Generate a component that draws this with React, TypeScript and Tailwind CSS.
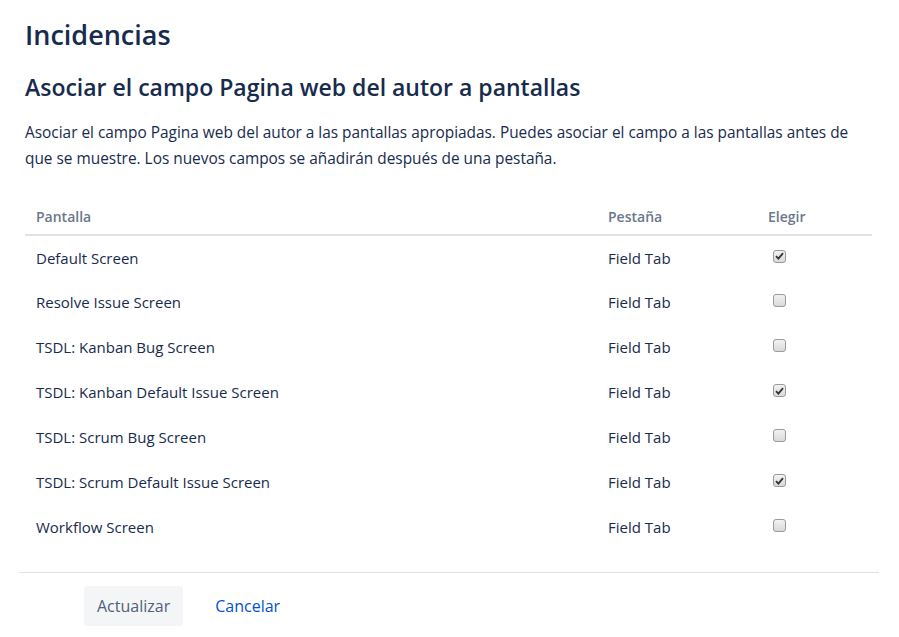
import { useState } from 'react';

type ScreenRow = {
  name: string;
  tab: string;
  selected: boolean;
};

const ROWS: ScreenRow[] = [
  { name: 'Default Screen', tab: 'Field Tab', selected: true },
  { name: 'Resolve Issue Screen', tab: 'Field Tab', selected: false },
  { name: 'TSDL: Kanban Bug Screen', tab: 'Field Tab', selected: false },
  { name: 'TSDL: Kanban Default Issue Screen', tab: 'Field Tab', selected: true },
  { name: 'TSDL: Scrum Bug Screen', tab: 'Field Tab', selected: false },
  { name: 'TSDL: Scrum Default Issue Screen', tab: 'Field Tab', selected: true },
  { name: 'Workflow Screen', tab: 'Field Tab', selected: false },
];

function Checkbox({ checked, onChange }: { checked: boolean; onChange: () => void }) {
  return (
    <button
      type="button"
      role="checkbox"
      aria-checked={checked}
      onClick={onChange}
      className="flex h-[13px] w-[13px] items-center justify-center rounded-[3px] border border-[#9a9a9a] bg-gradient-to-b from-[#f2f2f2] to-[#d9d9d9]"
    >
      {checked ? (
        <svg width="9" height="8" viewBox="0 0 9 8" aria-hidden="true">
          <path d="M1 4.2 L3.4 6.6 L8 1.2" fill="none" stroke="#333" strokeWidth="1.8" />
        </svg>
      ) : null}
    </button>
  );
}

export default function App() {
  const [rows, setRows] = useState(ROWS);

  const toggle = (index: number) => {
    setRows((current) =>
      current.map((row, i) => (i === index ? { ...row, selected: !row.selected } : row))
    );
  };

  return (
    <div className="min-h-screen bg-white font-['Open_Sans',sans-serif] text-[#172b4d]">
      <div className="px-[19px] pt-[17px]">
        <div className="px-[6px]">
          <h1 className="text-[27px] font-semibold leading-[36px]">Incidencias</h1>
          <h2 className="mt-[18px] text-[23px] font-semibold leading-[32px]">
            Asociar el campo Pagina web del autor a pantallas
          </h2>
          <p className="mt-[17px] max-w-[840px] text-[15.4px] leading-[26px]">
            Asociar el campo Pagina web del autor a las pantallas apropiadas. Puedes asociar el campo a las
            pantallas antes de que se muestre. Los nuevos campos se añadirán después de una pestaña.
          </p>

          <table className="mt-[26px] w-[847px] border-collapse text-left">
            <thead>
              <tr className="border-b-2 border-[#dfe1e6]">
                <th className="h-[37px] w-[572px] px-[11px] text-[14px] font-semibold text-[#6b778c]">Pantalla</th>
                <th className="w-[160px] px-[11px] text-[14px] font-semibold text-[#6b778c]">Pestaña</th>
                <th className="px-[11px] text-[14px] font-semibold text-[#6b778c]">Elegir</th>
              </tr>
            </thead>
            <tbody>
              {rows.map((row, index) => (
                <tr key={row.name}>
                  <td className="h-[45px] px-[11px] text-[15px]">{row.name}</td>
                  <td className="h-[45px] px-[11px] text-[15px]">{row.tab}</td>
                  <td className="h-[45px] px-[11px] pl-[16px]">
                    <div className="-mt-[4px]">
                      <Checkbox checked={row.selected} onChange={() => toggle(index)} />
                    </div>
                  </td>
                </tr>
              ))}
            </tbody>
          </table>
        </div>

        <div className="mt-[22px] w-[860px] border-t border-[#dfe1e6] pt-[13px]">
          <div className="flex items-center gap-[12px] pl-[65px]">
            <button
              type="button"
              className="h-[40px] rounded-[3px] bg-[#f4f5f7] px-[13px] text-[16px] text-[#505f79]"
            >
              Actualizar
            </button>
            <a href="#" className="px-[20px] text-[16px] text-[#0052cc]">
              Cancelar
            </a>
          </div>
        </div>
      </div>
    </div>
  );
}
